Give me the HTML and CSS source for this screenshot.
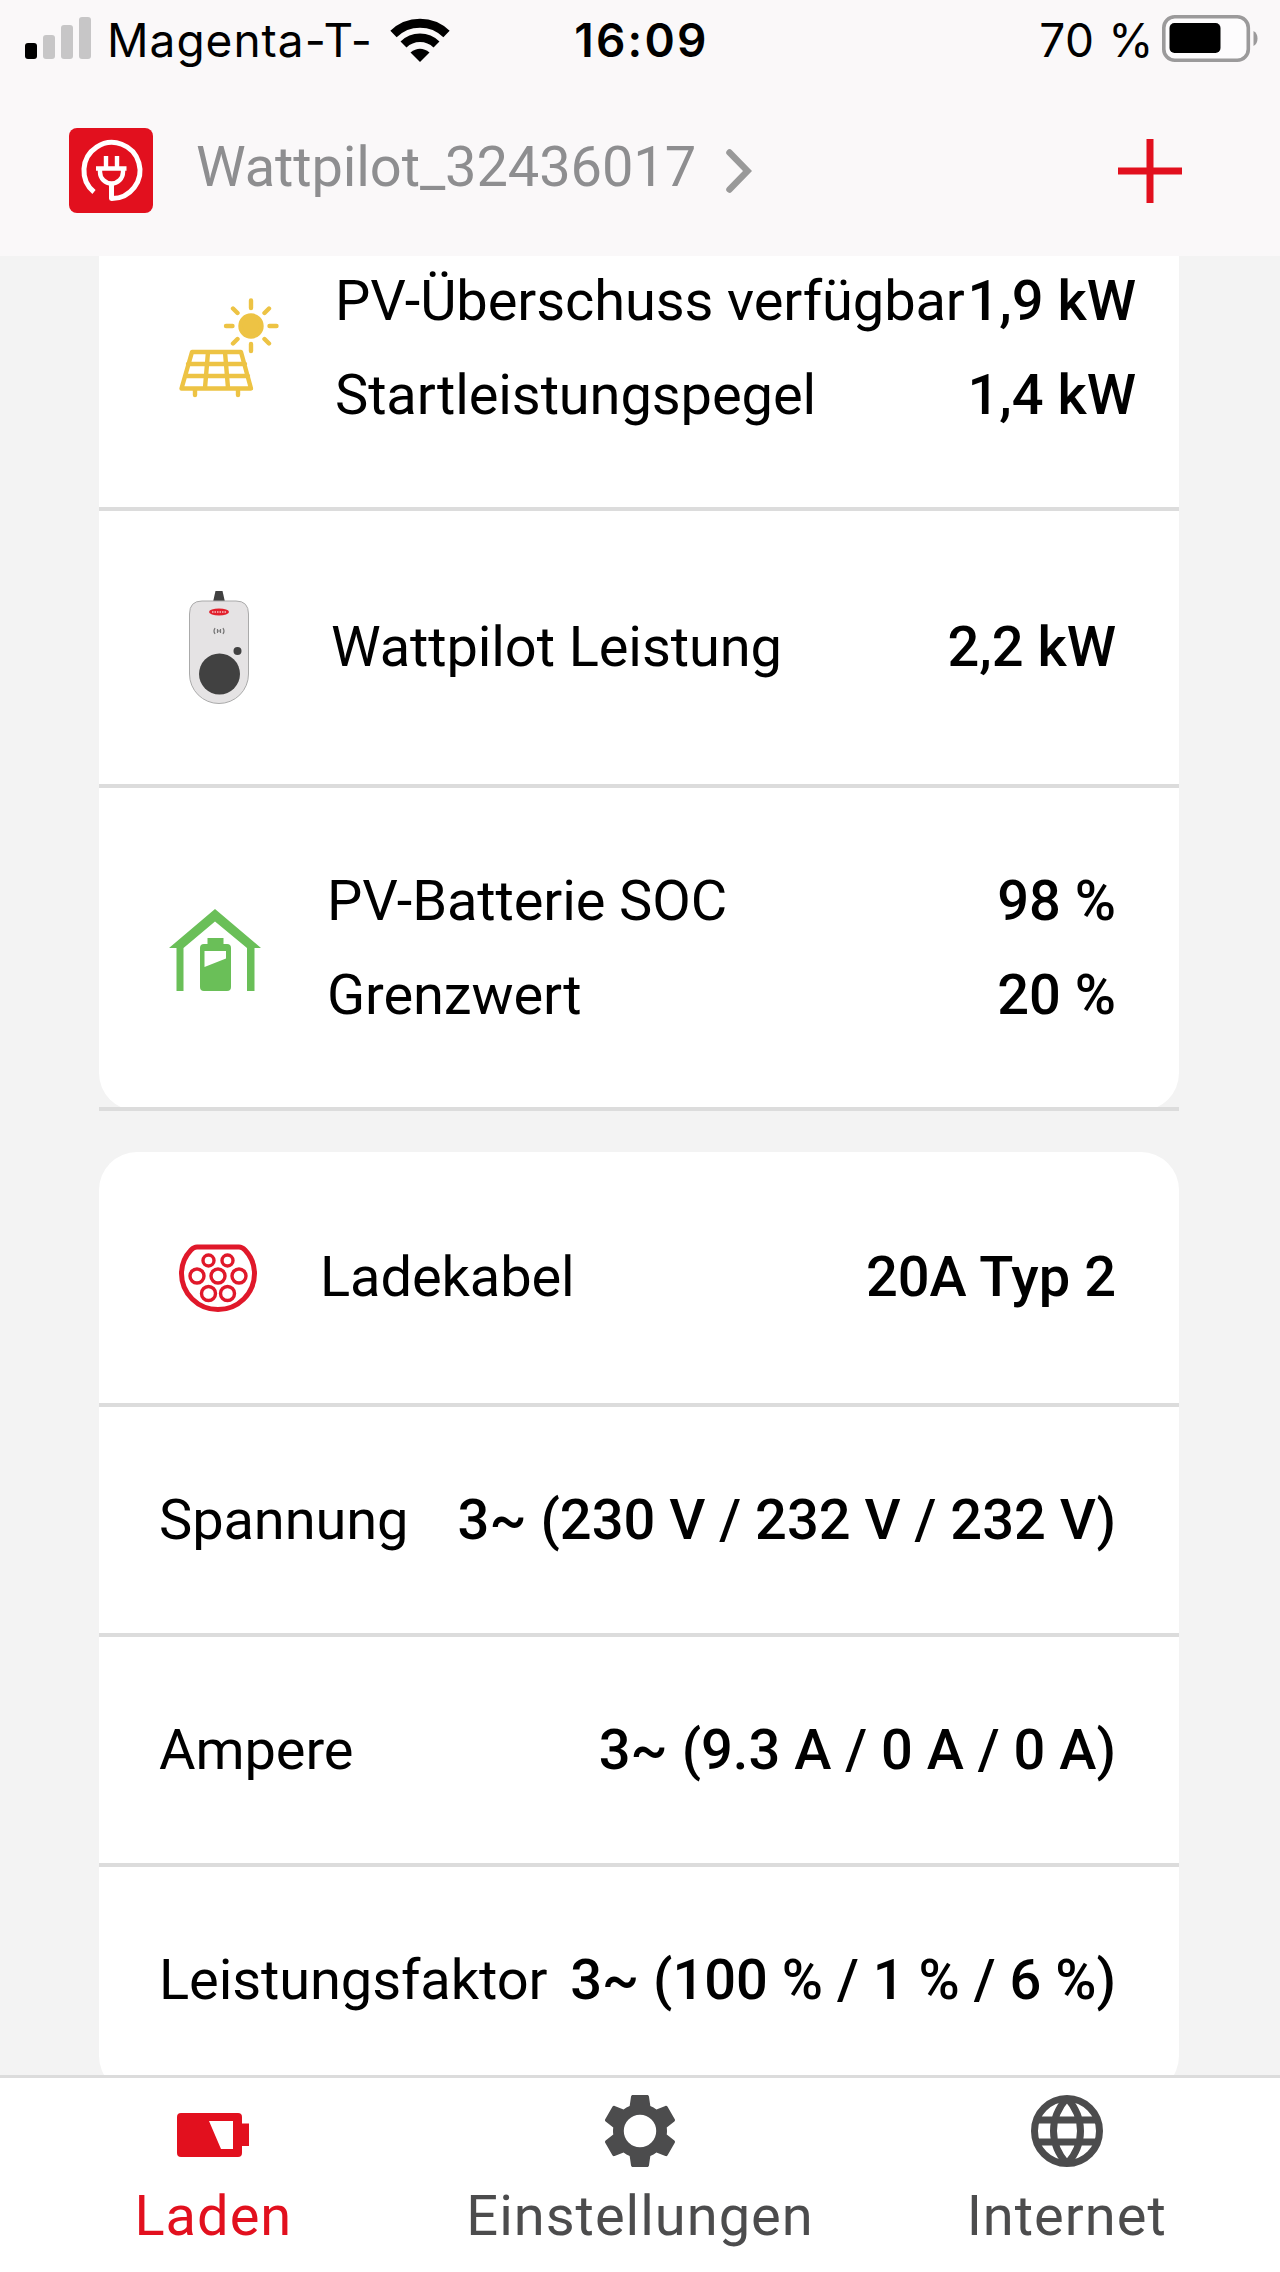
FILE: index.html
```html
<!DOCTYPE html>
<html lang="de">
<head>
    <meta charset="UTF-8">
    <meta name="viewport" content="width=device-width, initial-scale=1.0">
    <title>Wattpilot</title>
    <link rel="stylesheet" href="styles.css">
</head>
<body>

    <header class="top">
        <div class="status-bar">
            <div class="status-left">
                <svg class="signal" viewBox="0 0 66 42">
                    <rect x="0" y="26" width="12" height="16" rx="3" fill="#000"/>
                    <rect x="18" y="18" width="12" height="24" rx="3" fill="#c7c6c7"/>
                    <rect x="36" y="8" width="12" height="34" rx="3" fill="#c7c6c7"/>
                    <rect x="54" y="0" width="12" height="42" rx="3" fill="#c7c6c7"/>
                </svg>
                <span class="carrier">Magenta-T-</span>
                <svg class="wifi" viewBox="0 0 60 44">
                    <path d="M3.500 16 A38 38 0 0 1 56.500 16" fill="none" stroke="#000" stroke-width="9"/>
                    <path d="M13.500 26.500 A23.500 23.500 0 0 1 46.500 26.500" fill="none" stroke="#000" stroke-width="8.500"/>
                    <path d="M30 44 L20.500 34.500 Q30 27 39.500 34.500 Z"/>
                </svg>
            </div>
            <span class="clock">16:09</span>
            <div class="status-right">
                <span class="percent">70 %</span>
                <svg class="battery" viewBox="0 0 96 47">
                    <rect x="1.800" y="1.800" width="84.500" height="43.400" rx="11" fill="#fff" fill-opacity=".6" stroke="#9b9a9b" stroke-width="3.600"/>
                    <rect x="7.500" y="8" width="51" height="30" rx="5"/>
                    <path d="M91.500 16 Q95.500 18 95.500 23.500 T91.500 31 Z" fill="#9b9a9b"/>
                </svg>
            </div>
        </div>
        <div class="device-bar">
            <svg class="logo" viewBox="0 0 84 85">
                <rect width="84" height="85" rx="8" fill="#e2101e"/>
                <g fill="none" stroke="#fff" stroke-width="5">
                    <path d="M25 64 A28 28 0 1 1 42.500 70.500 V55" stroke-linejoin="round"/>
                    <path d="M27 40.500 H57.500 M31 40 V44 A11.500 11.500 0 0 0 54 44 V40 M37 28 V40 M48 28 V40" stroke-width="4.400"/>
                </g>
            </svg>
            <span class="device-name">Wattpilot_32436017</span>
            <svg class="chevron" viewBox="0 0 26 44">
                <path d="M3.500 3.500 L21.500 22 L3.500 40.500" fill="none" stroke="#999" stroke-width="6.500" stroke-linecap="round"/>
            </svg>
            <svg class="plus" viewBox="0 0 64 64">
                <path d="M32 0 V64 M0 32 H64" stroke="#e2101e" stroke-width="7"/>
            </svg>
        </div>
    </header>

    <main class="content">
        <section class="card card-energy">
            <div class="row row-pv">
                <svg class="icon icon-pv" viewBox="0 0 100 100">
                    <g fill="none" stroke="#edc344" stroke-width="4.400" stroke-linecap="round" stroke-linejoin="round">
                        <circle cx="72" cy="28" r="10.500" fill="#edc344"/>
                        <path d="M72 2.500 V10 M72 46 V53 M47 28 H53.500 M90.500 28 H97.500 M54 10.500 L58.500 15 M90 10.500 L85.500 15 M54 45.500 L58.500 41 M90 45.500 L85.500 41"/>
                        <path d="M13 54 H62 L72 90.500 H2.500 Z M9 66 H66 M6 78 H69 M29 54 L26 90 M46 54 L49 90 M16 91 V97 M59 91 V97"/>
                    </g>
                </svg>
                <div class="lines">
                    <div class="line"><span class="label">PV-Überschuss verfügbar</span><span class="value">1,9 kW</span></div>
                    <div class="line"><span class="label">Startleistungspegel</span><span class="value">1,4 kW</span></div>
                </div>
            </div>
            <div class="row row-power">
                <svg class="icon icon-charger" viewBox="0 0 60 113">
                    <path d="M26.500 0 H33.500 L36 11 H24 Z" fill="#414141"/>
                    <path d="M13 10 H47 Q59.500 10 59.500 23 V83 A29.500 29.500 0 0 1 .5 83 V23 Q.5 10 13 10 Z" fill="#e5e3e4" stroke="#aaa"/>
                    <ellipse cx="30" cy="21" rx="10" ry="3.400" fill="#e2202c"/>
                    <path d="M23 21 H37" stroke="#f4bcc0" stroke-width="1.500" stroke-dasharray="1.500 1"/>
                    <path d="M26 37 Q24 40 26 43 M34 37 Q36 40 34 43 M28.500 38 V42 M31.500 38 V42 M28.500 40 H31.500" fill="none" stroke="#777" stroke-width="1.200"/>
                    <circle cx="48.500" cy="60" r="4" fill="#414141"/>
                    <circle cx="30.500" cy="83" r="20.500" fill="#414141"/>
                </svg>
                <div class="lines">
                    <div class="line"><span class="label">Wattpilot Leistung</span><span class="value">2,2 kW</span></div>
                </div>
            </div>
            <div class="row row-battery">
                <svg class="icon icon-house" viewBox="0 0 92 82" fill="#6abf58">
                    <path d="M46 0 L92 39 H85.500 V82 H78 V39 L46 12.500 L14.500 39 V82 H7.500 V39 H0 Z"/>
                    <path fill-rule="evenodd" d="M38.500 29 H54.500 V35 H58 Q62 35 62 39 V78 Q62 82 58 82 H35 Q31 82 31 78 V39 Q31 35 35 35 H38.500 Z M35.500 42 V58 L57 49.500 V42 Z"/>
                </svg>
                <div class="lines">
                    <div class="line"><span class="label">PV-Batterie SOC</span><span class="value">98 %</span></div>
                    <div class="line"><span class="label">Grenzwert</span><span class="value">20 %</span></div>
                </div>
            </div>
        </section>

        <section class="card card-cable">
            <div class="row row-cable">
                <svg class="icon icon-plug" viewBox="0 0 78 68">
                    <g fill="none" stroke="#e0182a" stroke-width="3.400">
                        <path d="M18 3 H60 Q63 3 66 6 Q75.500 16 75.500 29.500 A36.500 36 0 0 1 2.500 29.500 Q2.500 16 12 6 Q15 3 18 3 Z" stroke-width="5"/>
                        <circle cx="29.500" cy="16.500" r="5.500"/><circle cx="48.500" cy="16.500" r="5.500"/>
                        <circle cx="18" cy="32" r="7"/><circle cx="39" cy="32" r="7"/><circle cx="60" cy="32" r="7"/>
                        <circle cx="29.500" cy="49.500" r="7"/><circle cx="48.500" cy="49.500" r="7"/>
                    </g>
                </svg>
                <div class="lines">
                    <div class="line"><span class="label">Ladekabel</span><span class="value">20A Typ 2</span></div>
                </div>
            </div>
            <div class="row row-plain">
                <span class="label">Spannung</span><span class="value">3~ (230 V / 232 V / 232 V)</span>
            </div>
            <div class="row row-plain">
                <span class="label">Ampere</span><span class="value">3~ (9.3 A / 0 A / 0 A)</span>
            </div>
            <div class="row row-plain">
                <span class="label">Leistungsfaktor</span><span class="value">3~ (100 % / 1 % / 6 %)</span>
            </div>
        </section>
    </main>

    <nav class="tabs">
        <div class="tab tab-active">
            <svg viewBox="0 0 72 72">
                <path fill="currentColor" fill-rule="evenodd" d="M4 18 H61 Q65 18 65 22 V28.500 H72 V51 H65 V58 Q65 62 61 62 H4 Q0 62 0 58 V22 Q0 18 4 18 Z M32 26 L44 54 H56 V26 Z"/>
            </svg>
            <span>Laden</span>
        </div>
        <div class="tab">
            <svg viewBox="2 2 20 20">
                <path fill="currentColor" d="M19.430 12.980c.04-.32.07-.64.07-.98s-.03-.66-.07-.98l2.110-1.650c.19-.15.24-.42.120-.64l-2-3.460c-.12-.22-.39-.3-.61-.22l-2.490 1c-.52-.4-1.080-.73-1.690-.98l-.38-2.650C14.460 2.180 14.250 2 14 2h-4c-.25 0-.46.18-.49.42l-.38 2.650c-.61.25-1.170.59-1.690.98l-2.490-1c-.23-.09-.49 0-.61.22l-2 3.460c-.13.22-.07.49.120.64l2.110 1.650c-.04.32-.07.65-.07.98s.03.66.07.98l-2.110 1.650c-.19.15-.24.42-.12.64l2 3.460c.12.22.39.3.61.22l2.490-1c.52.4 1.080.73 1.690.98l.38 2.650c.03.24.24.42.49.42h4c.25 0 .46-.18.49-.42l.38-2.650c.61-.25 1.170-.59 1.690-.98l2.490 1c.23.09.49 0 .61-.22l2-3.460c.12-.22.07-.49-.12-.64l-2.110-1.650zM12 16.500A4.500 4.500 0 1 1 12 7.500a4.500 4.500 0 0 1 0 9z"/>
            </svg>
            <span>Einstellungen</span>
        </div>
        <div class="tab">
            <svg viewBox="0 0 72 72" fill="none" stroke="currentColor" stroke-width="7">
                <circle cx="36" cy="36" r="32.500"/>
                <path d="M6 25 H66 M6 47 H66 M36 3 Q22.500 18 22.500 36 T36 69 M36 3 Q49.500 18 49.500 36 T36 69"/>
            </svg>
            <span>Internet</span>
        </div>
    </nav>

</body>
</html>
```
FILE: styles.css
```css
* {
    box-sizing: border-box;
}
body {
    margin: 0;
    height: 2272px;
    overflow: hidden;
    display: flex;
    flex-direction: column;
    background-color: #f3f3f3;
    font-family: Roboto, "Liberation Sans", sans-serif;
    font-size: 56px;
    line-height: 94px;
    color: #000;
    white-space: nowrap;
}
svg {
    display: block;
    flex: none;
}
.top {
    height: 256px;
    flex: none;
    background-color: #faf8f9;
}
.status-bar {
    height: 80px;
    padding: 0 22px 0 25px;
    display: grid;
    grid-template-columns: 1fr auto 1fr;
    align-items: center;
    font-family: Inter, sans-serif;
    font-size: 46px;
    line-height: 80px;
}
.status-left,
.status-right {
    display: flex;
    align-items: center;
}
.status-right {
    justify-content: flex-end;
    gap: 8px;
}
.signal {
    width: 66px;
    height: 42px;
    margin: -4px 16px 0 0;
}
.carrier {
    letter-spacing: 1px;
}
.wifi {
    width: 60px;
    height: 44px;
    margin-left: 17px;
}
.clock {
    font-weight: 600;
    letter-spacing: 2.2px;
}
.percent {
    letter-spacing: .6px;
}
.battery {
    width: 96px;
    height: 47px;
    margin-top: -3px;
}
.device-bar {
    display: flex;
    align-items: center;
    height: 181px;
    padding: 0 98px 0 69px;
}
.logo {
    width: 84px;
    height: 85px;
    margin-right: 43px;
}
.device-name {
    color: #8e8e90;
    margin-top: -8px;
    letter-spacing: -.1px;
}
.chevron {
    width: 26px;
    height: 44px;
    margin-left: 30px;
}
.plus {
    width: 64px;
    height: 64px;
    margin-left: auto;
}
.content {
    height: 1819px;
    flex: none;
    padding: 0 101px 0 99px;
    overflow: hidden;
}
.card {
    background-color: #fff;
}
.card-energy {
    border-radius: 0 0 38px 38px;
    height: 855px;
}
.card-cable {
    margin-top: 41px;
    height: 942px;
    border-radius: 38px;
}
.row {
    display: flex;
    align-items: center;
    border-bottom: 4px solid #dcdcdc;
}
.lines {
    flex: 1;
}
.line {
    display: flex;
    justify-content: space-between;
}
.label {
    letter-spacing: -.1px;
}
.value {
    font-weight: 500;
}
.row-pv {
    height: 255px;
    padding: 0 43px 67px 80px;
}
.row-power {
    height: 277px;
    padding: 0 63px 0 90px;
}
.row-power .lines,
.row-cable .lines {
    margin-top: -2px;
}
.row-battery {
    height: 323px;
    padding: 0 63px 0 70px;
}
.row-cable {
    height: 255px;
    padding: 0 63px 0 80px;
}
.row-plain {
    height: 230px;
    padding: 0 63px 0 60px;
    justify-content: space-between;
}
.row-plain:last-child {
    border-bottom-color: transparent;
}
.icon-pv {
    width: 100px;
    height: 100px;
    margin-right: 56px;
}
.icon-charger {
    width: 60px;
    height: 113px;
    margin-right: 82px;
}
.icon-house {
    width: 92px;
    height: 82px;
    margin: 5px 66px 0 0;
}
.icon-plug {
    width: 78px;
    height: 68px;
    margin-right: 63px;
}
.tabs {
    flex: 1;
    display: flex;
    border-top: 3px solid #dcdcdc;
    background-color: #fff;
    color: #4c4c4d;
}
.tab {
    flex: 1;
    display: flex;
    flex-direction: column;
    align-items: center;
    gap: 2px;
    padding-top: 17px;
    letter-spacing: 1px;
}
.tab svg {
    width: 72px;
    height: 72px;
}
.tab-active {
    color: #e2101e;
}
```
